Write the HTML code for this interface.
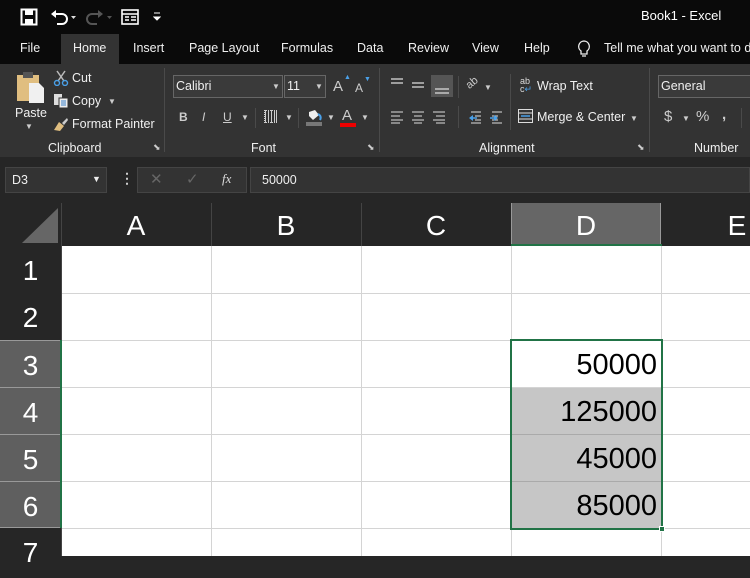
<!DOCTYPE html>
<html><head><meta charset="utf-8"><style>
*{margin:0;padding:0;box-sizing:border-box}
body{width:750px;height:556px;overflow:hidden;background:#262626;font-family:"Liberation Sans",sans-serif;color:#fff;position:relative}
.a{position:absolute;white-space:nowrap}
.t{font-size:12.5px;color:#f0f0f0}
.sep{position:absolute;width:1px;background:#4a4a4a}
.cell{position:absolute;background:#fff}
.vl{position:absolute;width:1px;background:#d4d4d4}
.hl{position:absolute;height:1px;background:#d4d4d4}
.rh{position:absolute;left:0;width:61px;height:47px;text-align:center;font-size:28px;line-height:47px;color:#fff}
.ch{position:absolute;top:203px;height:43px;width:150px;text-align:center;font-size:28px;line-height:46px;color:#fff}
.num{position:absolute;left:512px;width:145px;text-align:right;font-size:29px;color:#000;height:47px;line-height:50px}
.dd{font-size:8px;color:#ccc}
</style></head><body>
<!-- title bar -->
<div class="a" style="left:0;top:0;width:750px;height:64px;background:#0a0a0a"></div>
<svg class="a" style="left:20px;top:8px" width="18" height="18" viewBox="0 0 18 18"><rect x="1.5" y="1.5" width="15" height="15" fill="none" stroke="#fff" stroke-width="2"/><rect x="5" y="2" width="8" height="5" fill="#fff"/><rect x="5" y="11" width="8" height="5" fill="#fff"/></svg>
<svg class="a" style="left:50px;top:8px" width="30" height="18" viewBox="0 0 30 18"><path d="M4 6h8a5 5 0 0 1 0 10H7" fill="none" stroke="#fff" stroke-width="2"/><path d="M1 6l5-4v8z" fill="#fff"/><path d="M21 8h5l-2.5 3z" fill="#ddd"/></svg>
<svg class="a" style="left:86px;top:8px" width="30" height="18" viewBox="0 0 30 18"><path d="M14 6H6a5 5 0 0 0 0 10h5" fill="none" stroke="#555" stroke-width="2"/><path d="M17 6l-5-4v8z" fill="#555"/><path d="M21 8h5l-2.5 3z" fill="#555"/></svg>
<svg class="a" style="left:121px;top:9px" width="18" height="16" viewBox="0 0 18 16"><rect x="1" y="1" width="16" height="14" fill="none" stroke="#fff" stroke-width="1.6"/><path d="M1 5h16M4 8h4M10 8h5M4 11h4M10 11h5" stroke="#fff" stroke-width="1.4"/></svg>
<svg class="a" style="left:153px;top:12px" width="8" height="10"><path d="M1 1h6M1 5h6l-3 3z" stroke="#fff" fill="#fff"/></svg>
<div class="a" style="left:641px;top:8px;font-size:13px">Book1  -  Excel</div>
<!-- tabs -->
<div class="a" style="left:61px;top:34px;width:58px;height:30px;background:#333"></div>
<div class="a t" style="left:20px;top:41px">File</div>
<div class="a t" style="left:73px;top:41px">Home</div>
<div class="a t" style="left:133px;top:41px">Insert</div>
<div class="a t" style="left:189px;top:41px">Page Layout</div>
<div class="a t" style="left:281px;top:41px">Formulas</div>
<div class="a t" style="left:357px;top:41px">Data</div>
<div class="a t" style="left:408px;top:41px">Review</div>
<div class="a t" style="left:472px;top:41px">View</div>
<div class="a t" style="left:524px;top:41px">Help</div>
<svg class="a" style="left:577px;top:40px" width="14" height="18" viewBox="0 0 14 18"><path d="M7 1a5.5 5.5 0 0 0-3 10v3h6v-3A5.5 5.5 0 0 0 7 1zM5 16h4" fill="none" stroke="#eee" stroke-width="1.3"/></svg>
<div class="a t" style="left:604px;top:41px">Tell me what you want to do</div>
<!-- ribbon -->
<div class="a" style="left:0;top:64px;width:750px;height:93px;background:#333"></div>
<svg class="a" style="left:15px;top:70px" width="32" height="34" viewBox="0 0 32 34"><rect x="2" y="5" width="22" height="26" fill="#e0be80"/><rect x="8" y="2" width="10" height="6" fill="#555"/><path d="M14 13h10l5 5v15H14z" fill="#f0f0f0"/></svg>
<div class="a t" style="left:15px;top:106px">Paste</div>
<div class="a dd" style="left:25px;top:122px">▼</div>
<svg class="a" style="left:53px;top:70px" width="16" height="16" viewBox="0 0 16 16"><path d="M4 1l7 10M12 1L5 11" stroke="#bbb" stroke-width="1.5"/><circle cx="4" cy="13" r="2.5" fill="none" stroke="#4aa0e8" stroke-width="1.4"/><circle cx="12" cy="13" r="2.5" fill="none" stroke="#4aa0e8" stroke-width="1.4"/></svg>
<div class="a t" style="left:72px;top:71px">Cut</div>
<svg class="a" style="left:53px;top:93px" width="16" height="16" viewBox="0 0 16 16"><rect x="1" y="1" width="8" height="11" fill="#ddd"/><rect x="6" y="5" width="9" height="10" fill="#eee" stroke="#333"/><path d="M8 8h5M8 10h5M8 12h5" stroke="#3a80c8"/></svg>
<div class="a t" style="left:72px;top:94px">Copy</div>
<div class="a dd" style="left:108px;top:97px">▼</div>
<svg class="a" style="left:53px;top:116px" width="16" height="16" viewBox="0 0 16 16"><path d="M1 14l5-8 5 4-4 5z" fill="#e0be80"/><path d="M9 7l5-5 1 2-4 5z" fill="#ccc"/></svg>
<div class="a t" style="left:72px;top:117px">Format Painter</div>
<div class="a t" style="left:48px;top:141px">Clipboard</div>
<div class="a" style="left:153px;top:142px;font-size:9px;color:#ccc">⬊</div>
<div class="sep" style="left:164px;top:68px;height:84px"></div>
<!-- font -->
<div class="a" style="left:173px;top:75px;width:110px;height:23px;border:1px solid #666;background:#3a3a3a"></div>
<div class="a t" style="left:176px;top:79px">Calibri</div>
<div class="a dd" style="left:272px;top:82px">▼</div>
<div class="a" style="left:284px;top:75px;width:42px;height:23px;border:1px solid #666;background:#3a3a3a"></div>
<div class="a t" style="left:287px;top:79px">11</div>
<div class="a dd" style="left:315px;top:82px">▼</div>
<div class="a" style="left:333px;top:78px;font-size:15px;color:#ccc">A</div><div class="a" style="left:344px;top:74px;font-size:7px;color:#4aa0e8">▲</div>
<div class="a" style="left:355px;top:81px;font-size:12px;color:#ccc">A</div><div class="a" style="left:364px;top:76px;font-size:7px;color:#4aa0e8">▼</div>
<div class="a" style="left:179px;top:110px;font-size:12px;font-weight:bold;color:#ccc">B</div>
<div class="a" style="left:202px;top:110px;font-size:12px;font-style:italic;color:#ccc">I</div>
<div class="a" style="left:223px;top:110px;font-size:12px;text-decoration:underline;color:#ccc">U</div>
<div class="a dd" style="left:241px;top:113px">▼</div>
<div class="sep" style="left:255px;top:108px;height:20px"></div>
<div class="a" style="left:264px;top:110px;width:13px;height:13px;border:1px dotted #ccc;background:repeating-linear-gradient(90deg,#ccc 0 1px,transparent 1px 3px)"></div>
<div class="a dd" style="left:285px;top:113px">▼</div>
<div class="sep" style="left:298px;top:108px;height:20px"></div>
<svg class="a" style="left:305px;top:108px" width="18" height="18" viewBox="0 0 18 18"><path d="M4 4l6-2 4 5-6 5-4-4z" fill="#eee"/><path d="M13 6q4 2 2 6" stroke="#4aa0e8" stroke-width="2" fill="none"/><rect x="1" y="14" width="16" height="4" fill="#777"/></svg>
<div class="a dd" style="left:327px;top:113px">▼</div>
<div class="a" style="left:342px;top:107px;font-size:15px;color:#ccc">A</div>
<div class="a" style="left:340px;top:123px;width:16px;height:4px;background:#e00"></div>
<div class="a dd" style="left:361px;top:113px">▼</div>
<div class="a t" style="left:251px;top:141px">Font</div>
<div class="a" style="left:367px;top:142px;font-size:9px;color:#ccc">⬊</div>
<div class="sep" style="left:379px;top:68px;height:84px"></div>
<!-- alignment -->
<svg class="a" style="left:389px;top:76px" width="70" height="20"><path d="M2 3h12M2 7h12M23 7h12M23 11h12M44 12h12M44 16h12" stroke="#ddd" stroke-width="1.2"/></svg>
<div class="a" style="left:431px;top:75px;width:22px;height:22px;background:#555"></div>
<svg class="a" style="left:433px;top:76px" width="20" height="20"><path d="M2 13h14M2 17h14" stroke="#ddd" stroke-width="1.2"/></svg>
<div class="sep" style="left:458px;top:76px;height:22px"></div>
<div class="a" style="left:466px;top:77px;font-size:11px;color:#ccc;transform:rotate(-40deg)">ab</div>
<div class="a dd" style="left:484px;top:83px">▼</div>
<svg class="a" style="left:389px;top:110px" width="120" height="14"><path d="M2 2h12M2 6h9M2 10h12M2 13h9M23 2h12M25 6h8M23 10h12M25 13h8M44 2h12M47 6h9M44 10h12M47 13h9" stroke="#ddd" stroke-width="1"/><path d="M82 2h10M86 6h6M86 10h6M82 13h10M103 2h10M103 6h6M103 10h6M103 13h10" stroke="#ddd"/><path d="M80 8l4-3v6zM105 5l4 3-4 3z" fill="#4aa0e8"/><path d="M84 8h4M101 8h4" stroke="#4aa0e8" stroke-width="1.6"/></svg>
<div class="sep" style="left:458px;top:106px;height:22px"></div>
<div class="sep" style="left:510px;top:74px;height:56px"></div>
<div class="a" style="left:520px;top:77px;font-size:9px;line-height:8px;color:#ddd">ab<br>c<span style="color:#4aa0e8">↵</span></div>
<div class="a t" style="left:537px;top:79px">Wrap Text</div>
<svg class="a" style="left:518px;top:109px" width="15" height="14"><rect x="0.5" y="0.5" width="14" height="13" fill="none" stroke="#ddd"/><path d="M0 4h15M0 10h15" stroke="#ddd"/><path d="M3 7h9" stroke="#4aa0e8" stroke-width="1.5"/></svg>
<div class="a t" style="left:537px;top:110px">Merge &amp; Center</div>
<div class="a dd" style="left:630px;top:114px">▼</div>
<div class="a t" style="left:479px;top:141px">Alignment</div>
<div class="a" style="left:637px;top:142px;font-size:9px;color:#ccc">⬊</div>
<div class="sep" style="left:649px;top:68px;height:84px"></div>
<div class="a" style="left:658px;top:75px;width:100px;height:23px;border:1px solid #666;background:#3a3a3a"></div>
<div class="a t" style="left:661px;top:79px">General</div>
<div class="a" style="left:664px;top:108px;font-size:15px;color:#ccc">$</div>
<div class="a dd" style="left:682px;top:114px">▼</div>
<div class="a" style="left:696px;top:108px;font-size:15px;color:#ccc">%</div>
<div class="a" style="left:722px;top:106px;font-size:15px;color:#ccc;font-weight:bold">,</div>
<div class="sep" style="left:741px;top:108px;height:20px"></div>
<div class="a t" style="left:694px;top:141px">Number</div>
<!-- formula bar -->
<div class="a" style="left:5px;top:167px;width:102px;height:26px;background:#333;border:1px solid #444"></div>
<div class="a t" style="left:12px;top:173px">D3</div>
<div class="a" style="left:92px;top:174px;font-size:9px;color:#eee">▼</div>
<div class="a" style="left:120px;top:170px;font-size:14px;color:#ccc;font-weight:bold">⋮</div>
<div class="a" style="left:137px;top:167px;width:110px;height:26px;background:#333;border:1px solid #444"></div>
<div class="a" style="left:150px;top:170px;font-size:15px;color:#666">✕</div>
<div class="a" style="left:186px;top:170px;font-size:15px;color:#666">✓</div>
<div class="a" style="left:222px;top:171px;font-size:13px;font-style:italic;font-family:'Liberation Serif',serif;color:#ddd">fx</div>
<div class="a" style="left:250px;top:167px;width:500px;height:26px;background:#333;border:1px solid #444"></div>
<div class="a t" style="left:262px;top:173px">50000</div>
<!-- headers -->
<div class="a" style="left:0;top:203px;width:61px;height:43px;background:#262626"></div>
<svg class="a" style="left:21px;top:207px" width="38" height="37"><path d="M37 1V36H1z" fill="#666"/></svg>
<div class="vl" style="left:61px;top:203px;height:353px;background:#444"></div>
<div class="ch" style="left:61px">A</div>
<div class="vl" style="left:211px;top:203px;height:43px;background:#444"></div>
<div class="ch" style="left:211px">B</div>
<div class="vl" style="left:361px;top:203px;height:43px;background:#444"></div>
<div class="ch" style="left:361px">C</div>
<div class="ch" style="left:511px;background:#666;border-left:1px solid #999;border-right:1px solid #999">D</div>
<div class="a" style="left:511px;top:244px;width:151px;height:2px;background:#217346"></div>
<div class="ch" style="left:662px">E</div>
<div class="rh" style="top:246px;line-height:50px">1</div>
<div class="rh" style="top:293px;line-height:50px">2</div>
<div class="rh" style="top:340px;background:#5f5f5f;border-top:1px solid #999;line-height:50px">3</div>
<div class="rh" style="top:387px;background:#5f5f5f;border-top:1px solid #999;line-height:50px">4</div>
<div class="rh" style="top:434px;background:#5f5f5f;border-top:1px solid #999;line-height:50px">5</div>
<div class="rh" style="top:481px;background:#5f5f5f;border-top:1px solid #999;border-bottom:1px solid #999;line-height:50px">6</div>
<div class="rh" style="top:528px;line-height:50px">7</div>
<div class="a" style="left:60px;top:340px;width:2px;height:188px;background:#217346"></div>
<!-- grid -->
<div class="cell" style="left:62px;top:246px;width:688px;height:310px"></div>
<div class="a" style="left:512px;top:388px;width:149px;height:140px;background:#c6c6c6"></div>
<div class="vl" style="left:211px;top:246px;height:310px"></div>
<div class="vl" style="left:361px;top:246px;height:310px"></div>
<div class="vl" style="left:511px;top:246px;height:310px"></div>
<div class="vl" style="left:661px;top:246px;height:310px"></div>
<div class="hl" style="left:62px;top:293px;width:688px"></div>
<div class="hl" style="left:62px;top:340px;width:688px"></div>
<div class="hl" style="left:62px;top:387px;width:688px"></div>
<div class="hl" style="left:62px;top:434px;width:688px"></div>
<div class="hl" style="left:62px;top:481px;width:688px"></div>
<div class="hl" style="left:62px;top:528px;width:688px"></div>
<div class="a" style="left:512px;top:434px;width:149px;height:1px;background:#aaa"></div>
<div class="a" style="left:512px;top:481px;width:149px;height:1px;background:#aaa"></div>
<div class="num" style="top:340px">50000</div>
<div class="num" style="top:387px">125000</div>
<div class="num" style="top:434px">45000</div>
<div class="num" style="top:481px">85000</div>
<div class="a" style="left:510px;top:339px;width:153px;height:191px;border:2px solid #217346"></div>
<div class="a" style="left:659px;top:526px;width:6px;height:6px;background:#217346;border:1px solid #fff"></div>
</body></html>
